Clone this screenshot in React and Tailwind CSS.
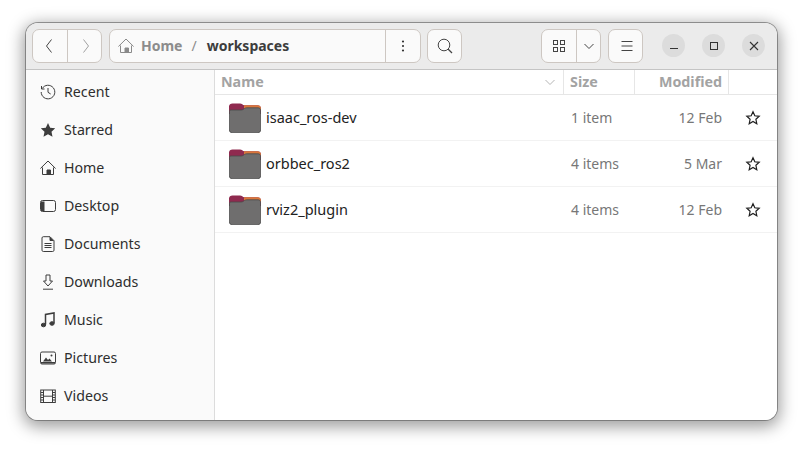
const F = () => (
  <svg width="32" height="30" viewBox="0 0 32 30" className="shrink-0 mt-[1px]">
    <path d="M0 3.500C0 1.500 1.500 .5 3.500 .5h7.500c2 0 2.500 1.700 4.500 1.700H28.500c2 0 3.500 1 3.500 3.500V11H0z" fill="#8f2a4f" />
    <path d="M15 2.200h13.500c2 0 3.500 1 3.500 3.500V7H15z" fill="#d9773c" />
    <path d="M.4 8.500C.4 7.500 1 7 2 7h9.500c2 0 2.500-.5 4-1.500.8-.5 1.500-.7 2.500-.7h11c1.700 0 2.600 1 2.600 2.700v19.500c0 1.700-1 2.600-2.600 2.600H3c-1.600 0-2.600-.9-2.600-2.600z" fill="#6f6e6e" stroke="#4a4a4a" strokeWidth=".8" />
  </svg>
);
const I = ({ children }) => (
  <svg width="16" height="16" viewBox="0 0 16 16" fill="none" stroke="#3d3d3d" strokeWidth="1" className="shrink-0">{children}</svg>
);
const icons = {
  Recent: <I><path d="M2.200 4.500A6.800 6.800 0 1 1 1.200 8" /><path d="M1.500 2v3h3" /><path d="M8 4v4.300l2.700 1.700" /></I>,
  Starred: <I><path d="M8 1l2.200 4.700 5 .6-3.700 3.500 1 5L8 12.300l-4.500 2.500 1-5L.8 6.300l5-.6z" fill="#3d3d3d" stroke="none" /></I>,
  Home: <I><path d="M.4 8.500L8 1l7.600 7.500" /><path d="M2.500 7.500v7h11v-7" /><path d="M7 14.500V10h3.500v4.500z" fill="#3d3d3d" /></I>,
  Desktop: <I><rect x=".5" y="2.500" width="15" height="11" rx="2" /><path d="M1 3.500h3.500v9.500H1z" fill="#3d3d3d" stroke="none" /></I>,
  Documents: <I><path d="M2 2c0-.8.500-1.300 1.300-1.300H10l4 4v9.500c0 .8-.5 1.300-1.300 1.300H3.300c-.8 0-1.300-.5-1.300-1.300z" /><path d="M10 1v3.500h3.500" fill="#3d3d3d" /><path d="M4.500 7.500h7M4.500 9.500h7M4.500 11.500h7" /></I>,
  Downloads: <I><path d="M6 1h4v6h2.500L8 12 3.500 7H6z" /><path d="M3 15.200h10" /></I>,
  Music: <I><path d="M5.500 12.500V2.500l8.500-1.500v10" strokeWidth="1.500" /><ellipse cx="3.500" cy="13" rx="2.200" ry="1.800" fill="#3d3d3d" /><ellipse cx="12" cy="11.500" rx="2.200" ry="1.800" fill="#3d3d3d" /></I>,
  Pictures: <I><rect x=".5" y="2" width="15" height="12" rx="1.500" /><path d="M3 11.500l3-4 2 2.500 1.500-1.500 2.500 3z" fill="#3d3d3d" stroke="none" /><circle cx="11.500" cy="5.500" r="1" fill="#3d3d3d" stroke="none" /><path d="M1 12.800h14" strokeWidth="1.500" /></I>,
  Videos: <I><rect x=".7" y="2" width="14.600" height="12.500" /><path d="M3.500 2v12.500M12.500 2v12.500M3.500 8.200h9" /><path d="M1 4.500h2.500M1 7h2.500M1 9.500h2.500M1 12h2.500M12.500 4.500H15M12.500 7H15M12.500 9.500H15M12.500 12H15" /></I>,
};
const Star = () => (
  <svg width="16" height="16" viewBox="0 0 16 16" fill="none" stroke="#1f1f1f" strokeWidth="1.200">
    <path d="M8 1.800l1.800 4 4.400.5-3.300 3 .9 4.400L8 11.500l-3.800 2.200.9-4.400-3.300-3 4.400-.5z" />
  </svg>
);
const Btn = ({ className = "", children }) => (
  <div className={`h-[34px] bg-[#fafafa] border border-[#cdc7c2] rounded-[7px] flex items-center ${className}`}>{children}</div>
);
const WinBtn = ({ children }) => (
  <div className="w-[23px] h-[23px] rounded-full bg-[#dcdcdc] flex items-center justify-center">{children}</div>
);
const rows = [
  ["isaac_ros-dev", "1 item", "12 Feb"],
  ["orbbec_ros2", "4 items", "5 Mar"],
  ["rviz2_plugin", "4 items", "12 Feb"],
];
export default function App() {
  return (
    <div className="w-[803px] h-[449px] bg-white pl-[26px] pt-[23px] overflow-hidden" style={{ fontFamily: '"Noto Sans", sans-serif' }}>
      <div className="w-[751px] h-[397px] rounded-[12px] flex flex-col overflow-hidden bg-[#fafafa] shadow-[0_0_0_1px_rgba(80,80,80,0.55),0_4px_16px_3px_rgba(0,0,0,0.38)]">
        <div className="h-[47px] shrink-0 bg-[#ebebeb] border-b border-[#c4c4c4] flex items-center pl-[6px] pb-[1px]">
          <Btn className="w-[70px]">
            <div className="w-[35px] h-full border-r border-[#cdc7c2] flex items-center justify-center">
              <svg width="16" height="16" viewBox="0 0 16 16" fill="none" stroke="#444" strokeWidth="1"><path d="M9.500 1.500L4.500 8l5 6.500" /></svg>
            </div>
            <div className="flex-1 flex items-center justify-center">
              <svg width="16" height="16" viewBox="0 0 16 16" fill="none" stroke="#a0a0a0" strokeWidth="1"><path d="M6.500 1.500l5 6.500-5 6.500" /></svg>
            </div>
          </Btn>
          <Btn className="w-[312px] ml-[7px]">
            <div className="flex-1 h-full flex items-center pl-[8px] text-[14px] font-bold">
              <svg width="16" height="16" viewBox="0 0 16 16" fill="none" stroke="#8a8a8a" strokeWidth="1"><path d="M.4 8.500L8 1l7.600 7.500" /><path d="M2.500 7.500v7h11v-7" /><path d="M7 14.500V10h3.500v4.500z" fill="#8a8a8a" /></svg>
              <span className="ml-[7px] text-[#8c8c8c]">Home</span>
              <span className="ml-[9px] text-[#8c8c8c] font-normal">/</span>
              <span className="ml-[10px] text-[#3d3d3d]">workspaces</span>
            </div>
            <div className="w-[35px] h-full border-l border-[#cdc7c2] flex items-center justify-center">
              <svg width="16" height="16" viewBox="0 0 16 16" fill="#333"><circle cx="8" cy="3.500" r="1.100" /><circle cx="8" cy="8" r="1.100" /><circle cx="8" cy="12.500" r="1.100" /></svg>
            </div>
          </Btn>
          <Btn className="w-[35px] ml-[6px] justify-center">
            <svg width="16" height="16" viewBox="0 0 16 16" fill="none" stroke="#444" strokeWidth="1"><circle cx="7" cy="7" r="5.800" /><path d="M11 11l4 4" strokeWidth="1.300" /></svg>
          </Btn>
          <Btn className="w-[60px] ml-[79px]">
            <div className="w-[35px] h-full border-r border-[#cdc7c2] flex items-center justify-center">
              <svg width="16" height="16" viewBox="0 0 16 16" fill="none" stroke="#444" strokeWidth="1"><rect x="2.500" y="2.500" width="4" height="4" /><rect x="9.500" y="2.500" width="4" height="4" /><rect x="2.500" y="9.500" width="4" height="4" /><rect x="9.500" y="9.500" width="4" height="4" /></svg>
            </div>
            <div className="flex-1 flex items-center justify-center">
              <svg width="12" height="12" viewBox="0 0 12 12" fill="none" stroke="#444" strokeWidth="1"><path d="M1.500 4l4.500 4.500L10.500 4" /></svg>
            </div>
          </Btn>
          <Btn className="w-[35px] ml-[7px] justify-center">
            <svg width="16" height="16" viewBox="0 0 16 16" fill="none" stroke="#444" strokeWidth="1"><path d="M3.500 3.500h11M3.500 8h11M3.500 12.500h11" /></svg>
          </Btn>
          <div className="flex gap-[17px] ml-[19px]">
            <WinBtn><div className="w-[8px] h-[1px] bg-[#333] mt-[6px]" /></WinBtn>
            <WinBtn><div className="w-[8px] h-[8px] border border-[#333]" /></WinBtn>
            <WinBtn>
              <svg width="10" height="10" viewBox="0 0 10 10" fill="none" stroke="#333" strokeWidth="1.100"><path d="M1 1l8 8M9 1l-8 8" /></svg>
            </WinBtn>
          </div>
        </div>
        <div className="flex flex-1 min-h-0">
          <div className="w-[189px] shrink-0 border-r border-[#dcdcdc] bg-[#fafafa] flex flex-col pt-[3px]">
            {Object.keys(icons).map((k) => (
              <div key={k} className="h-[38px] flex items-center pl-[14px] gap-[8px] text-[14.2px] text-[#2e2e2e]">
                {icons[k]}
                <span>{k}</span>
              </div>
            ))}
          </div>
          <div className="flex-1 bg-white flex flex-col">
            <div className="h-[25px] shrink-0 border-b border-[#e6e6e6] flex text-[14.3px] font-bold text-[#a3a3a3]">
              <div className="w-[349px] border-r border-[#e6e6e6] flex items-center justify-between pl-[6px] pr-[7px]">
                <span>Name</span>
                <svg width="12" height="12" viewBox="0 0 12 12" fill="none" stroke="#b5b5b5" strokeWidth="1"><path d="M1.500 4l4.500 4.500L10.500 4" /></svg>
              </div>
              <div className="w-[71px] border-r border-[#e6e6e6] flex items-center pl-[6px]">Size</div>
              <div className="w-[94px] border-r border-[#e6e6e6] flex items-center justify-end pr-[6px]">Modified</div>
            </div>
            {rows.map(([n, s, d]) => (
              <div key={n} className="h-[46px] shrink-0 border-b border-[#f2f2f2] flex items-center">
                <div className="w-[349px] flex items-center pl-[14px] gap-[5px] text-[14.5px] text-[#222]">
                  <F />
                  <span>{n}</span>
                </div>
                <div className="w-[71px] pl-[7px] text-[14px] text-[#777]">{s}</div>
                <div className="w-[94px] pr-[7px] text-right text-[14px] text-[#777]">{d}</div>
                <div className="ml-[16px] flex"><Star /></div>
              </div>
            ))}
          </div>
        </div>
      </div>
    </div>
  );
}
